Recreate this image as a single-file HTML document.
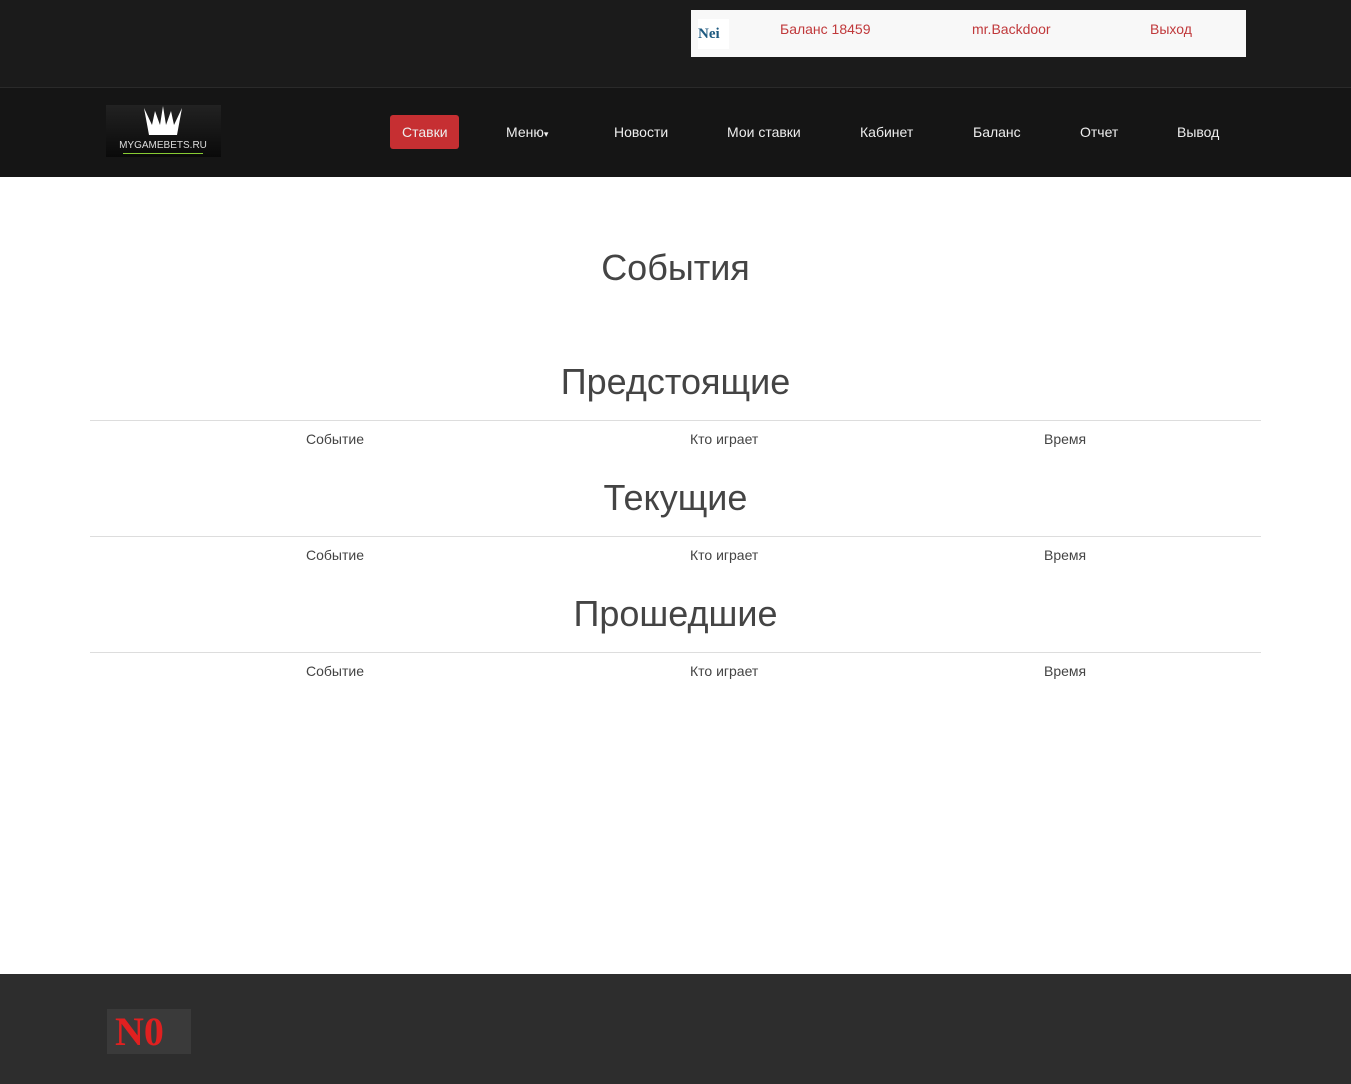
<!DOCTYPE html>
<html><head><meta charset="utf-8"><style>
body{margin:0;width:1351px;height:1084px;position:relative;font-family:"Liberation Sans",sans-serif;background:#fff;overflow:hidden}
.a{position:absolute}
.top{left:0;top:0;width:1351px;height:87px;background:#1b1b1b;border-bottom:1px solid #2a2a2a}
.box{left:691px;top:10px;width:555px;height:47px;background:#f8f8f8}
.box span{position:absolute;top:11px;color:#c0393b;font-size:14px}
.nav{left:0;top:88px;width:1351px;height:89px;background:#151515}
.nav span{position:absolute;top:36px;color:#eee;font-size:14px}
.h{left:0;width:1351px;text-align:center;color:#444;font-size:36px}
.ln{left:90px;width:1171px;height:1px;background:#ddd}
.th{font-size:14px;color:#444}
.foot{left:0;top:974px;width:1351px;height:110px;background:#2d2d2d}
</style></head><body>
<div class="a top"></div>
<div class="a box">
<div class="a" style="left:7px;top:9px;width:31px;height:30px;background:#fff;font:bold 15px 'Liberation Serif',serif;color:#1e5a80;line-height:30px">N<span style="position:static;color:#1e5a80;font-size:15px">ei</span></div>
<span style="left:89px">Баланс 18459</span>
<span style="left:281px">mr.Backdoor</span>
<span style="left:459px">Выход</span>
</div>
<div class="a nav">
<div class="a" style="left:106px;top:17px;width:115px;height:52px;background:linear-gradient(#222,#0a0a0a)">
<svg width="115" height="52" style="position:absolute;left:0;top:0"><path d="M38 3 L46 20 L49 6 L54 20 L57 1 L60 20 L65 6 L68 20 L76 3 L71 30 L43 30 Z" fill="#fff"/><text x="57" y="43" fill="#ddd" font-size="10" text-anchor="middle" font-family="Liberation Sans">MYGAMEBETS.RU</text><rect x="17" y="48" width="80" height="1" fill="#8c3"/></svg>
</div>
<div class="a" style="left:390px;top:27px;width:69px;height:34px;background:#c62f32;border-radius:3px"></div>
<span style="left:402px">Ставки</span>
<span style="left:506px">Меню<span style="position:static;font-size:9px">▾</span></span>
<span style="left:614px">Новости</span>
<span style="left:727px">Мои ставки</span>
<span style="left:860px">Кабинет</span>
<span style="left:973px">Баланс</span>
<span style="left:1080px">Отчет</span>
<span style="left:1177px">Вывод</span>
</div>
<div class="a h" style="top:247px">События</div>
<div class="a h" style="top:361px">Предстоящие</div>
<div class="a ln" style="top:420px"></div>
<div class="a th" style="left:306px;top:431px">Событие</div><div class="a th" style="left:690px;top:431px">Кто играет</div><div class="a th" style="left:1044px;top:431px">Время</div>
<div class="a h" style="top:477px">Текущие</div>
<div class="a ln" style="top:536px"></div>
<div class="a th" style="left:306px;top:547px">Событие</div><div class="a th" style="left:690px;top:547px">Кто играет</div><div class="a th" style="left:1044px;top:547px">Время</div>
<div class="a h" style="top:593px">Прошедшие</div>
<div class="a ln" style="top:652px"></div>
<div class="a th" style="left:306px;top:663px">Событие</div><div class="a th" style="left:690px;top:663px">Кто играет</div><div class="a th" style="left:1044px;top:663px">Время</div>
<div class="a foot">
<div class="a" style="left:107px;top:35px;width:84px;height:45px;background:#3a3a3a;color:#e02020;font:bold 40px 'Liberation Serif',serif;line-height:45px;padding-left:8px;box-sizing:border-box">N0</div>
</div>
</body></html>
